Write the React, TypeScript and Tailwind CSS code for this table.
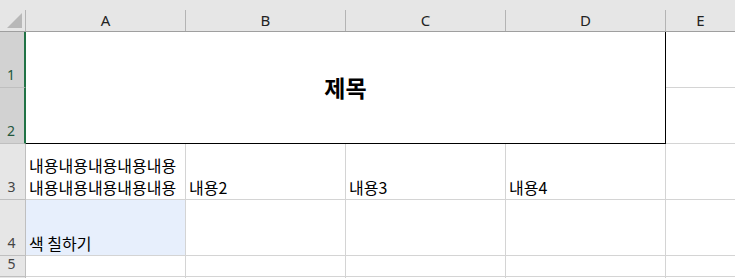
const cols = ["A", "B", "C", "D", "E"];

const grid = "border-r border-b border-[#d4d4d4]";
const text = "font-['Noto_Sans_CJK_KR','Malgun_Gothic',sans-serif] text-[16px] leading-[22px] text-black whitespace-nowrap";

function RowHead({ n, active }: { n?: number; active?: boolean }) {
  return (
    <div
      className={
        "flex items-end justify-center border-b border-[#bfbfbf] pr-[2px] pb-[3px] font-['Noto_Sans',sans-serif] text-[14px] leading-[18px] " +
        (active
          ? "border-r-2 border-r-[#217346] bg-[#d2d2d2] text-[#22573d]"
          : "border-r border-r-[#bfbfbf] bg-[#e6e6e6] text-[#444]")
      }
    >
      {n}
    </div>
  );
}

function Cell({ children, fill }: { children?: React.ReactNode; fill?: string }) {
  return (
    <div className={`${grid} ${text} flex items-end overflow-hidden pb-[1px] pl-[3px] ${fill ?? "bg-white"}`}>
      {children}
    </div>
  );
}

export default function App() {
  return (
    <div className="h-[278px] w-[735px] overflow-hidden bg-white">
      <div className="grid grid-cols-[26px_160px_160px_160px_160px_70px] grid-rows-[32px_56px_56px_56px_56px_21px_21px]">
        {/* corner + column headers */}
        <div className="flex border-b border-[#9f9f9f] bg-[#e6e6e6] pt-[10px]">
          <div className="flex h-full w-full items-end justify-end border-r border-[#b4b4b4] pr-[3px] pb-[3px]">
            <svg width="15" height="15" viewBox="0 0 15 15">
              <polygon points="15,0 15,15 0,15" fill="#b8b8b8" />
            </svg>
          </div>
        </div>
        {cols.map((c) => (
          <div key={c} className="flex border-b border-[#9f9f9f] bg-[#e6e6e6] pt-[10px]">
            <div className="flex h-full w-full items-center justify-center border-r border-[#b4b4b4] pb-[1px] font-['Noto_Sans',sans-serif] text-[15px] text-[#222]">
              {c}
            </div>
          </div>
        ))}

        {/* rows 1-2: merged title */}
        <RowHead n={1} active />
        <div className="col-span-4 col-start-2 row-span-2 row-start-2 flex items-center justify-center border-r border-b border-black bg-white pb-[1px] font-['Noto_Sans_CJK_KR','Malgun_Gothic',sans-serif] text-[23px] font-bold text-black">
          제목
        </div>
        <Cell />
        <RowHead n={2} active />
        <Cell />

        {/* row 3, A3 wraps */}
        <RowHead n={3} />
        <Cell>
          <div>
            <div>내용내용내용내용내용</div>
            <div>내용내용내용내용내용</div>
          </div>
        </Cell>
        <Cell>내용2</Cell>
        <Cell>내용3</Cell>
        <Cell>내용4</Cell>
        <Cell />

        {/* row 4 */}
        <RowHead n={4} />
        <Cell fill="bg-[#e7effc]">색 칠하기</Cell>
        <Cell />
        <Cell />
        <Cell />
        <Cell />

        {/* row 5 */}
        <RowHead n={5} />
        <Cell />
        <Cell />
        <Cell />
        <Cell />
        <Cell />

        {/* row 6, only its top edge shows */}
        <RowHead />
        <Cell />
        <Cell />
        <Cell />
        <Cell />
        <Cell />
      </div>
    </div>
  );
}
